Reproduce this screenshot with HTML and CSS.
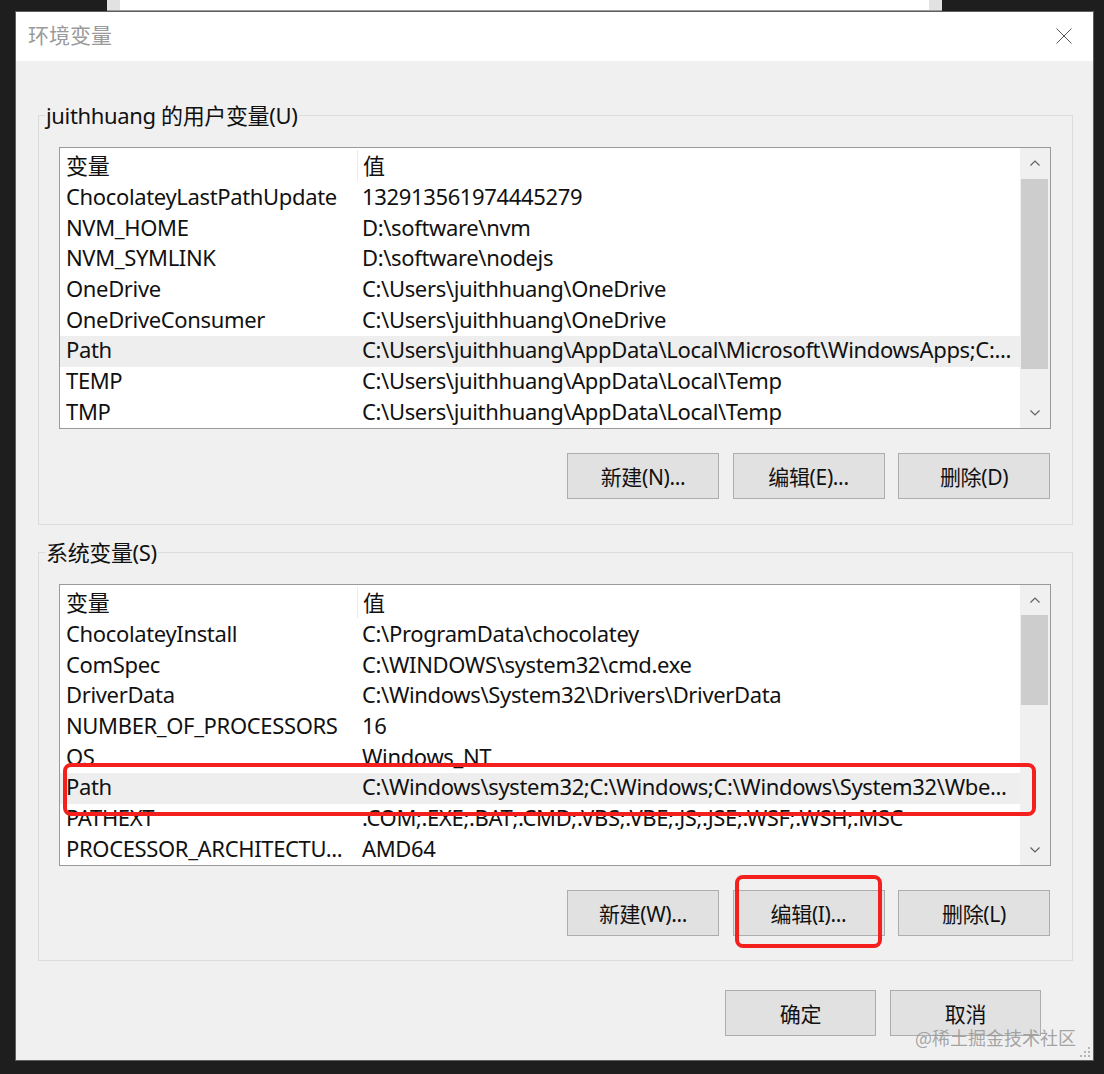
FILE: index.html
```html
<!DOCTYPE html>
<html lang="zh-CN">
<head>
<meta charset="utf-8">
<title>环境变量</title>
<link rel="stylesheet" href="styles.css">
</head>
<body>
<div class="behind"><div class="behind-edge"></div><div class="behind-main"></div><div class="behind-edge"></div></div>
<div class="dialog">
  <div class="titlebar">
    <span class="title">环境变量</span>
    <svg class="close" width="16" height="16" viewBox="0 0 16 16"><path d="M0.5 0.5 L15.5 15.5 M15.5 0.5 L0.5 15.5" stroke="#555" stroke-width="1" fill="none"/></svg>
  </div>
  <div class="content">
    <fieldset class="group group-user">
      <legend>juithhuang 的用户变量(U)</legend>
      <div class="list">
        <div class="list-body">
          <div class="row header"><span class="c1">变量</span><span class="c2">值</span></div>
          <div class="row"><span class="c1">ChocolateyLastPathUpdate</span><span class="c2">132913561974445279</span></div>
          <div class="row"><span class="c1">NVM_HOME</span><span class="c2">D:\software\nvm</span></div>
          <div class="row"><span class="c1">NVM_SYMLINK</span><span class="c2">D:\software\nodejs</span></div>
          <div class="row"><span class="c1">OneDrive</span><span class="c2">C:\Users\juithhuang\OneDrive</span></div>
          <div class="row"><span class="c1">OneDriveConsumer</span><span class="c2">C:\Users\juithhuang\OneDrive</span></div>
          <div class="row selected"><span class="c1">Path</span><span class="c2">C:\Users\juithhuang\AppData\Local\Microsoft\WindowsApps;C:...</span></div>
          <div class="row"><span class="c1">TEMP</span><span class="c2">C:\Users\juithhuang\AppData\Local\Temp</span></div>
          <div class="row"><span class="c1">TMP</span><span class="c2">C:\Users\juithhuang\AppData\Local\Temp</span></div>
        </div>
        <div class="scrollbar">
          <div class="sb-btn"><svg width="10" height="6" viewBox="0 0 10 6"><path d="M0.5 5.5 L5 1 L9.5 5.5" stroke="#606060" stroke-width="1.2" fill="none"/></svg></div>
          <div class="sb-track"><div class="sb-thumb thumb-user"></div></div>
          <div class="sb-btn"><svg width="10" height="6" viewBox="0 0 10 6"><path d="M0.5 0.5 L5 5 L9.5 0.5" stroke="#606060" stroke-width="1.2" fill="none"/></svg></div>
        </div>
      </div>
      <div class="buttons">
        <div class="btn">新建(N)...</div>
        <div class="btn">编辑(E)...</div>
        <div class="btn">删除(D)</div>
      </div>
    </fieldset>

    <fieldset class="group group-sys">
      <legend>系统变量(S)</legend>
      <div class="list">
        <div class="list-body">
          <div class="row header"><span class="c1">变量</span><span class="c2">值</span></div>
          <div class="row"><span class="c1">ChocolateyInstall</span><span class="c2">C:\ProgramData\chocolatey</span></div>
          <div class="row"><span class="c1">ComSpec</span><span class="c2">C:\WINDOWS\system32\cmd.exe</span></div>
          <div class="row"><span class="c1">DriverData</span><span class="c2">C:\Windows\System32\Drivers\DriverData</span></div>
          <div class="row"><span class="c1">NUMBER_OF_PROCESSORS</span><span class="c2">16</span></div>
          <div class="row"><span class="c1">OS</span><span class="c2">Windows_NT</span></div>
          <div class="row selected"><span class="c1">Path</span><span class="c2">C:\Windows\system32;C:\Windows;C:\Windows\System32\Wbe...</span></div>
          <div class="row"><span class="c1">PATHEXT</span><span class="c2">.COM;.EXE;.BAT;.CMD;.VBS;.VBE;.JS;.JSE;.WSF;.WSH;.MSC</span></div>
          <div class="row"><span class="c1">PROCESSOR_ARCHITECTU...</span><span class="c2">AMD64</span></div>
        </div>
        <div class="scrollbar">
          <div class="sb-btn"><svg width="10" height="6" viewBox="0 0 10 6"><path d="M0.5 5.5 L5 1 L9.5 5.5" stroke="#606060" stroke-width="1.2" fill="none"/></svg></div>
          <div class="sb-track"><div class="sb-thumb thumb-sys"></div></div>
          <div class="sb-btn"><svg width="10" height="6" viewBox="0 0 10 6"><path d="M0.5 0.5 L5 5 L9.5 0.5" stroke="#606060" stroke-width="1.2" fill="none"/></svg></div>
        </div>
        <div class="mark mark-row"></div>
      </div>
      <div class="buttons">
        <div class="btn">新建(W)...</div>
        <div class="btn btn-marked">编辑(I)...<span class="mark mark-btn"></span></div>
        <div class="btn">删除(L)</div>
      </div>
    </fieldset>

    <div class="footer">
      <div class="btn btn-foot">确定</div>
      <div class="btn btn-foot">取消</div>
    </div>
  </div>
  <div class="watermark">@稀土掘金技术社区</div>
  <svg class="grip" width="10" height="10" viewBox="0 0 10 10"><g fill="#b5b5b5"><rect x="8" y="0" width="2" height="2"/><rect x="4" y="4" width="2" height="2"/><rect x="8" y="4" width="2" height="2"/><rect x="0" y="8" width="2" height="2"/><rect x="4" y="8" width="2" height="2"/><rect x="8" y="8" width="2" height="2"/></g></svg>
</div>
</body>
</html>
```

FILE: styles.css
```css
* { box-sizing: border-box; }

html, body {
  margin: 0;
  padding: 0;
}

body {
  width: 1104px;
  height: 1074px;
  overflow: hidden;
  background: #1e1e1e;
  font-family: "Noto Sans", "Noto Sans CJK SC", sans-serif;
  font-size: 22px;
  letter-spacing: -0.35px;
  color: #111;
}

.behind {
  display: flex;
  margin-left: 107px;
  width: 835px;
  height: 11px;
  border-bottom: 1px solid #9c9c9c;
}
.behind-edge { width: 13px; background: #e2e2e2; }
.behind-main { flex: 1; background: #fff; }

.dialog {
  position: relative;
  margin-left: 15px;
  width: 1079px;
  height: 1050px;
  border: 1px solid #5e5e5e;
  background: #f0f0f0;
  display: flex;
  flex-direction: column;
}

.titlebar {
  height: 49px;
  background: #fff;
  display: flex;
  align-items: center;
  justify-content: space-between;
  padding: 0 21px 2px 12px;
}
.title {
  color: #9a9a9a;
  font-size: 21px;
  line-height: 24px;
  letter-spacing: 0;
  font-family: "Noto Sans CJK SC", sans-serif;
  margin-bottom: 3px;
}
.close { display: block; }

.content {
  flex: 1;
  padding: 42px 20px 0 22px;
  display: flex;
  flex-direction: column;
}

.group {
  margin: 0;
  border: 1px solid #dcdcdc;
  padding: 19px 21px 25px 20px;
  min-width: 0;
}
.group legend {
  margin-left: -14px;
  padding: 0 1px;
  font-size: 22px;
  line-height: 26px;
  color: #111;
}
.group-user { margin-top: -1px; }
.group-sys {
  margin-top: 14px;
  padding-top: 19px;
  padding-bottom: 24px;
}

.list {
  position: relative;
  height: 282px;
  border: 1px solid #9a9a9a;
  background: #fff;
  display: flex;
}
.list-body {
  flex: 1;
  overflow: hidden;
  min-width: 0;
}
.row {
  display: flex;
  height: 30.7px;
  line-height: 26.7px;
  padding-bottom: 4px;
  white-space: nowrap;
}
.row.header {
  height: 35px;
  padding-top: 2px;
  padding-bottom: 2px;
  line-height: 31px;
}
.row.header .c2 { border-left: 1px solid #ececec; }
.row.selected { background: #eeeeee; }
.c1 {
  width: 297px;
  flex: none;
  padding-left: 6px;
}
.c2 {
  flex: 1;
  padding-left: 5px;
}

.scrollbar {
  width: 30px;
  flex: none;
  background: #f0f0f0;
  display: flex;
  flex-direction: column;
}
.sb-btn {
  height: 30px;
  display: flex;
  align-items: center;
  justify-content: center;
}
.sb-btn svg { display: block; }
.sb-track {
  flex: 1;
  padding: 0 2px 0 1px;
}
.sb-thumb { background: #cdcdcd; }
.thumb-user { height: 190px; margin-top: 1px; }
.thumb-sys { height: 90px; margin-top: 0; }

.buttons {
  margin-top: 24px;
  display: flex;
  justify-content: flex-end;
  gap: 13.5px;
  padding-right: 1px;
}
.btn {
  position: relative;
  width: 152px;
  height: 46px;
  background: #e1e1e1;
  border: 1px solid #adadad;
  display: flex;
  align-items: center;
  justify-content: center;
  font-size: 21px;
  color: #111;
}

.footer {
  margin-top: 29px;
  display: flex;
  justify-content: flex-end;
  gap: 14px;
  padding-right: 32px;
}
.btn-foot { width: 151px; }

.mark {
  position: absolute;
  border: 4px solid #f3201e;
  border-radius: 8px;
}
.mark-row {
  left: 3px;
  top: 178px;
  width: 973px;
  height: 53px;
}
.mark-btn {
  left: 1px;
  top: -16px;
  width: 147px;
  height: 73px;
}

.watermark {
  position: absolute;
  right: 17px;
  bottom: 12px;
  font-family: "Noto Sans CJK SC", sans-serif;
  font-size: 18px;
  letter-spacing: 0;
  line-height: 22px;
  color: rgba(150, 150, 150, 0.85);
}
.grip {
  position: absolute;
  right: 3px;
  bottom: 3px;
}
```
